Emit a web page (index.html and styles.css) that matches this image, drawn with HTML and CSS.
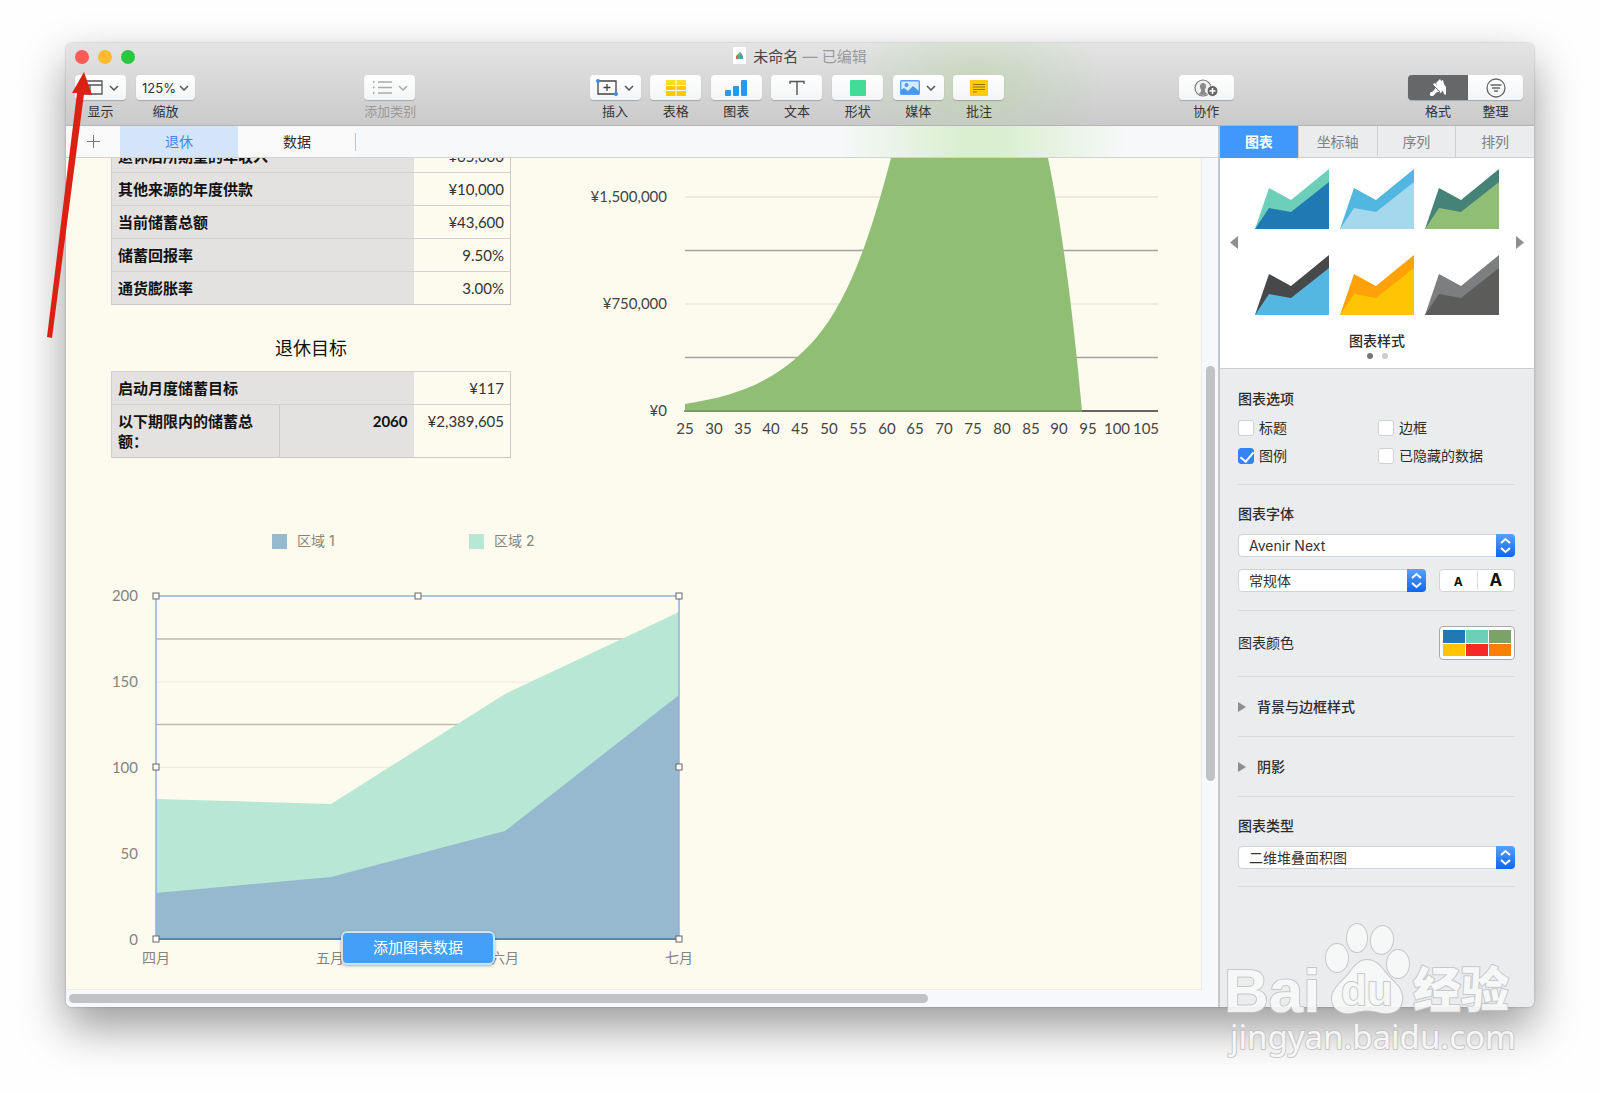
FILE: index.html
```html
<!DOCTYPE html>
<html lang="zh-CN">
<head>
    <meta charset="UTF-8">
    <meta name="viewport" content="width=device-width, initial-scale=1.0">
    <title>未命名</title>
    <link rel="stylesheet" href="styles.css">
</head>
<body>
    <div class="window">
        <header class="toolbar">
            <div class="titlebar">
                <div class="lights">
                    <button type="button" class="light red" aria-label="关闭"></button>
                    <button type="button" class="light yellow" aria-label="最小化"></button>
                    <button type="button" class="light green" aria-label="缩放窗口"></button>
                </div>
                <div class="title">
                    <svg width="13" height="17" viewBox="0 0 13 17">
                        <rect width="13" height="17" rx="1" fill="#fff"/>
                        <path d="M3 12V9l2-2v5z" fill="#e8604c"/>
                        <path d="M5 12V7l2-2v7z" fill="#62b37a"/>
                        <path d="M7 12V5l1 1 2 3v3z" fill="#4a9fb5"/>
                    </svg>
                    <span>未命名 <span class="edited">— 已编辑</span></span>
                </div>
            </div>
            <div class="tools">
                <div class="group">
                    <div class="tool">
                        <button type="button" id="view">
                            <svg width="20" height="15" viewBox="0 0 20 15" fill="none" stroke="#555" stroke-width="1.3"><path d="M1 1h18v13H1zM1 5h18M7 5v9"/></svg>
                            <svg class="chev" width="10" height="6" viewBox="0 0 10 6"><path d="M1 1l4 4 4-4"/></svg>
                        </button>
                        <label for="view">显示</label>
                    </div>
                    <div class="tool zoom">
                        <button type="button" id="zoom">125%
                            <svg class="chev" width="10" height="6" viewBox="0 0 10 6"><path d="M1 1l4 4 4-4"/></svg>
                        </button>
                        <label for="zoom">缩放</label>
                    </div>
                </div>
                <div class="space space-first"></div>
                <div class="tool off">
                    <button type="button" id="category" disabled>
                        <svg width="20" height="15" viewBox="0 0 20 15" stroke="#aaa" stroke-width="1.3"><path d="M6 2h14M6 7.500h14M6 13h14"/><path d="M1 .5l2 1.500L1 3.500zM1 6l2 1.500L1 9zM1 11.500l2 1.500-2 1.500z" fill="#aaa" stroke="none"/></svg>
                        <svg class="chev" width="10" height="6" viewBox="0 0 10 6"><path d="M1 1l4 4 4-4"/></svg>
                    </button>
                    <label for="category">添加类别</label>
                </div>
                <div class="space"></div>
                <div class="group insert">
                    <div class="tool">
                        <button type="button" id="insert">
                            <svg width="22" height="17" viewBox="0 0 22 17"><path d="M2 2h18v13H2zM11 5v7M7.500 8.500h7" fill="none" stroke="#444" stroke-width="1.300"/><circle cx="2" cy="2" r="2" fill="#3c8cf0"/><circle cx="20" cy="15" r="2" fill="#3c8cf0"/></svg>
                            <svg class="chev" width="10" height="6" viewBox="0 0 10 6"><path d="M1 1l4 4 4-4"/></svg>
                        </button>
                        <label for="insert">插入</label>
                    </div>
                    <div class="tool">
                        <button type="button" id="table">
                            <svg width="20" height="16" viewBox="0 0 20 16"><rect width="20" height="16" rx="1" fill="#ffc90a"/><rect width="20" height="5" rx="1" fill="#f8e01c"/><path d="M10 0v16M0 5.500h20M0 10.500h20" stroke="#fff" stroke-width="1"/></svg>
                        </button>
                        <label for="table">表格</label>
                    </div>
                    <div class="tool">
                        <button type="button" id="chart">
                            <svg width="22" height="16" viewBox="0 0 22 16" fill="#1f9cf0"><rect y="10" width="6" height="6" rx="1"/><rect x="8" y="6" width="6" height="10" rx="1"/><rect x="16" width="6" height="16" rx="1"/></svg>
                        </button>
                        <label for="chart">图表</label>
                    </div>
                    <div class="tool">
                        <button type="button" id="text">
                            <svg width="16" height="16" viewBox="0 0 16 16" fill="none" stroke="#555" stroke-width="1.400"><path d="M1 4V1.500h14V4M8 1.500V15"/></svg>
                        </button>
                        <label for="text">文本</label>
                    </div>
                    <div class="tool">
                        <button type="button" id="shape">
                            <svg width="16" height="16" viewBox="0 0 16 16"><rect width="16" height="16" rx="1" fill="#42dc98"/></svg>
                        </button>
                        <label for="shape">形状</label>
                    </div>
                    <div class="tool">
                        <button type="button" id="media">
                            <svg width="20" height="15" viewBox="0 0 20 15"><rect x=".7" y=".7" width="18.600" height="13.600" rx="1" fill="#d9eafd" stroke="#5b9ff5" stroke-width="1.400"/><circle cx="6.500" cy="5" r="2" fill="#4b95f3"/><path d="M1 14v-4l3-2 4 3 5-5 6 5v3z" fill="#4b95f3"/></svg>
                            <svg class="chev" width="10" height="6" viewBox="0 0 10 6"><path d="M1 1l4 4 4-4"/></svg>
                        </button>
                        <label for="media">媒体</label>
                    </div>
                    <div class="tool">
                        <button type="button" id="comment">
                            <svg width="18" height="16" viewBox="0 0 18 16"><rect width="18" height="16" rx="1" fill="#ffcc0d"/><path d="M3 4.500h12M3 7h12M3 9.500h12M3 12h4" stroke="#9a7410" stroke-width="1.200"/></svg>
                        </button>
                        <label for="comment">批注</label>
                    </div>
                </div>
                <div class="space"></div>
                <div class="tool wide">
                    <button type="button" id="collab">
                        <svg width="25" height="18" viewBox="0 0 25 18"><circle cx="9" cy="9" r="8" fill="#f2f2f2" stroke="#777" stroke-width="1.200"/><path d="M9 4c2 0 3 1.500 3 3.500 0 1.500-.5 2-1 3v2l2 2c-2 2-6 2-8 0l2-2v-2c-.500-1-1-1.500-1-3C6 5.500 7 4 9 4z" fill="#8a8a8a"/><circle cx="18.500" cy="12" r="5.500" fill="#666" stroke="#f8f8f8"/><path d="M18.500 9v6M15.500 12h6" stroke="#fff" stroke-width="1.500"/></svg>
                    </button>
                    <label for="collab">协作</label>
                </div>
                <div class="space"></div>
                <div class="segmented">
                    <div class="tool format">
                        <button type="button" id="format">
                            <svg width="18" height="18" viewBox="0 0 18 18" fill="#fff"><path d="M7 4l4-4 1 2 2-1 1 4 2 3v7l-1 1-1-1-1-3-3 1z"/><path d="M4 5l2-1 7 8-1 2-2-1-2 0-3 3c-1 2-5 1-4-1 0-2 1-2 2-2l3-3 0-2z"/><path d="M5 7l6 6" stroke="#666769"/></svg>
                        </button>
                        <label for="format">格式</label>
                    </div>
                    <div class="tool wide arrange">
                        <button type="button" id="arrange">
                            <svg width="20" height="20" viewBox="0 0 20 20" fill="none" stroke="#666" stroke-width="1.300"><circle cx="10" cy="10" r="9"/><path d="M4.500 7h11M6 10h8M8 13h4"/></svg>
                        </button>
                        <label for="arrange">整理</label>
                    </div>
                </div>
            </div>
        </header>

        <div class="content">
            <main class="document">
                <nav class="sheets">
                    <button type="button" class="add" aria-label="添加工作表"><svg width="13" height="13" viewBox="0 0 13 13" stroke="#777"><path d="M6.500 0v13M0 6.500h13"/></svg></button>
                    <button type="button" class="active">退休</button>
                    <button type="button">数据</button>
                </nav>
                <div class="canvas">
                    <div class="sheet">
                        <div class="top">
                            <div class="tables">
                                <table class="savings">
                                    <tr><th>退休后所期望的年收入</th><td>¥65,000</td></tr>
                                    <tr><th>其他来源的年度供款</th><td>¥10,000</td></tr>
                                    <tr><th>当前储蓄总额</th><td>¥43,600</td></tr>
                                    <tr><th>储蓄回报率</th><td>9.50%</td></tr>
                                    <tr><th>通货膨胀率</th><td>3.00%</td></tr>
                                </table>
                                <h2>退休目标</h2>
                                <table>
                                    <colgroup><col class="goal"><col class="year"><col></colgroup>
                                    <tr><th colspan="2">启动月度储蓄目标</th><td>¥117</td></tr>
                                    <tr><th>以下期限内的储蓄总额：</th><th class="num">2060</th><td>¥2,389,605</td></tr>
                                </table>
                            </div>
                            <svg class="growth" width="590" height="283" viewBox="-104 -253 590 283">
                                <path d="M0-214h473M0-107h473" stroke="#dddbd0"/>
                                <path d="M0-160.500h473M0-53.500h473" stroke="#a3a29c" stroke-width="1.500"/>
                                <path d="M-1 0h474" stroke="#666663" stroke-width="2"/>
                                <path d="M0 0V-7C60-16 97-34 131-73C164-112 185-173 206-253H363C376-190 388-100 397 0z" fill="#90be75"/>
                                <path d="M-1 0h398" stroke="#7b9b68" stroke-width="2"/>
                                <g text-anchor="end">
                                    <text x="-18" y="-209">¥1,500,000</text>
                                    <text x="-18" y="-102">¥750,000</text>
                                    <text x="-18" y="5">¥0</text>
                                </g>
                                <g text-anchor="middle">
                                    <text x="0" y="23">25</text><text x="29" y="23">30</text><text x="58" y="23">35</text>
                                    <text x="86" y="23">40</text><text x="115" y="23">45</text><text x="144" y="23">50</text>
                                    <text x="173" y="23">55</text><text x="202" y="23">60</text><text x="230" y="23">65</text>
                                    <text x="259" y="23">70</text><text x="288" y="23">75</text><text x="317" y="23">80</text>
                                    <text x="346" y="23">85</text><text x="374" y="23">90</text><text x="403" y="23">95</text>
                                    <text x="432" y="23">100</text><text x="461" y="23">105</text>
                                </g>
                            </svg>
                        </div>

                        <div class="legend">
                            <span class="blue">区域 1</span>
                            <span class="mint">区域 2</span>
                        </div>
                        <div class="plot">
                            <svg width="600" height="390" viewBox="-52 -358 600 390">
                                <path d="M0-257h523M0-171.500h523" stroke="#eceade"/>
                                <path d="M0-300h523M0-214.500h523" stroke="#bdbab0" stroke-width="1.500"/>
                                <path d="M0 0V-140L175-135L349-245L523-327V0z" fill="#b8e7d5"/>
                                <path d="M0 0V-46L175-62L349-108L523-244V0z" fill="#96b9cf"/>
                                <path d="M0 0V-343H523V0" fill="none" stroke="#92aede" stroke-width="1.500"/>
                                <path d="M0 0h523" stroke="#5f83b5" stroke-width="2"/>
                                <g fill="#fff" stroke="#666">
                                    <rect x="-3" y="-346" width="6" height="6"/><rect x="259" y="-346" width="6" height="6"/><rect x="520" y="-346" width="6" height="6"/>
                                    <rect x="-3" y="-175" width="6" height="6"/><rect x="520" y="-175" width="6" height="6"/>
                                    <rect x="-3" y="-3" width="6" height="6"/><rect x="520" y="-3" width="6" height="6"/>
                                </g>
                                <g text-anchor="end">
                                    <text x="-18" y="-338">200</text>
                                    <text x="-18" y="-252">150</text>
                                    <text x="-18" y="-166">100</text>
                                    <text x="-18" y="-80">50</text>
                                    <text x="-18" y="6">0</text>
                                </g>
                                <g class="months" text-anchor="middle">
                                    <text x="0" y="24">四月</text>
                                    <text x="174" y="24">五月</text>
                                    <text x="349" y="24">六月</text>
                                    <text x="523" y="24">七月</text>
                                </g>
                            </svg>
                            <button type="button" class="edit-data">添加图表数据</button>
                        </div>
                    </div>
                    <div class="scroll vertical"><div class="thumb"></div></div>
                    <div class="scroll horizontal"><div class="thumb"></div></div>
                </div>
            </main>

            <aside class="inspector">
                <nav class="tabs">
                    <button type="button" class="active">图表</button>
                    <button type="button">坐标轴</button>
                    <button type="button">序列</button>
                    <button type="button">排列</button>
                </nav>
                <div class="styles">
                    <div class="carousel">
                        <button type="button" class="arrow" aria-label="上一页"><svg width="8" height="13" viewBox="0 0 8 13"><path d="M8 0v13L0 6.500z"/></svg></button>
                        <div class="thumbs">
                            <svg viewBox="0 0 74 60"><path d="M0 60L14 19L36 31L74 0V60z" fill="#6dcfb9"/><path d="M0 60L14 39L36 43L74 13V60z" fill="#2079b2"/></svg>
                            <svg viewBox="0 0 74 60"><path d="M0 60L14 19L36 31L74 0V60z" fill="#51b7e0"/><path d="M0 60L14 39L36 43L74 13V60z" fill="#a5d8ed"/></svg>
                            <svg viewBox="0 0 74 60"><path d="M0 60L14 19L36 31L74 0V60z" fill="#458377"/><path d="M0 60L14 39L36 43L74 13V60z" fill="#90be75"/></svg>
                            <svg viewBox="0 0 74 60"><path d="M0 60L14 19L36 31L74 0V60z" fill="#47484a"/><path d="M0 60L14 39L36 43L74 13V60z" fill="#53b7e1"/></svg>
                            <svg viewBox="0 0 74 60"><path d="M0 60L14 19L36 31L74 0V60z" fill="#ffa20a"/><path d="M0 60L14 39L36 43L74 13V60z" fill="#ffc403"/></svg>
                            <svg viewBox="0 0 74 60"><path d="M0 60L14 19L36 31L74 0V60z" fill="#7c7e7f"/><path d="M0 60L14 39L36 43L74 13V60z" fill="#5c5c5a"/></svg>
                        </div>
                        <button type="button" class="arrow" aria-label="下一页"><svg width="8" height="13" viewBox="0 0 8 13"><path d="M0 0v13L8 6.500z"/></svg></button>
                    </div>
                    <h3>图表样式</h3>
                    <div class="dots"><i class="on"></i><i></i></div>
                </div>

                <section class="options">
                    <h3>图表选项</h3>
                    <div class="checks">
                        <label><input type="checkbox">标题</label>
                        <label><input type="checkbox">边框</label>
                        <label><input type="checkbox" checked>图例</label>
                        <label><input type="checkbox">已隐藏的数据</label>
                    </div>
                </section>
                <section class="fonts">
                    <h3><label for="family">图表字体</label></h3>
                    <div class="select">
                        <select id="family"><option>Avenir Next</option></select>
                        <svg width="19" height="23" viewBox="0 0 19 23"><path d="M5 9l4.500-4L14 9M5 14l4.500 4 4.500-4"/></svg>
                    </div>
                    <div class="row">
                        <div class="select">
                            <select aria-label="字样"><option>常规体</option></select>
                            <svg width="19" height="23" viewBox="0 0 19 23"><path d="M5 9l4.500-4L14 9M5 14l4.500 4 4.500-4"/></svg>
                        </div>
                        <div class="sizes">
                            <button type="button" class="smaller">A</button>
                            <button type="button" class="bigger">A</button>
                        </div>
                    </div>
                </section>
                <section class="colors">
                    <label for="palette">图表颜色</label>
                    <button type="button" id="palette"><i class="c1"></i><i class="c2"></i><i class="c3"></i><i class="c4"></i><i class="c5"></i><i class="c6"></i></button>
                </section>
                <section class="fold">
                    <button type="button"><svg width="8" height="10" viewBox="0 0 8 10"><path d="M0 0v10l8-5z"/></svg>背景与边框样式</button>
                </section>
                <section class="fold">
                    <button type="button"><svg width="8" height="10" viewBox="0 0 8 10"><path d="M0 0v10l8-5z"/></svg>阴影</button>
                </section>
                <section class="type">
                    <h3><label for="type">图表类型</label></h3>
                    <div class="select">
                        <select id="type"><option>二维堆叠面积图</option></select>
                        <svg width="19" height="23" viewBox="0 0 19 23"><path d="M5 9l4.500-4L14 9M5 14l4.500 4 4.500-4"/></svg>
                    </div>
                </section>
            </aside>
        </div>

        <svg class="pointer" width="46" height="268" viewBox="0 0 46 268" fill="#db2114"><path d="M0 265L30 21L25 21L37 0L45 23L37 22L5 266z"/></svg>

        <svg class="watermark" width="300" height="146" viewBox="0 0 300 146">
            <text class="brand" x="4" y="91">Bai</text>
            <g class="paw">
                <ellipse cx="117" cy="37" rx="11" ry="14"/>
                <ellipse cx="137" cy="17" rx="10" ry="14"/>
                <ellipse cx="162" cy="19" rx="11" ry="14" transform="rotate(8 162 19)"/>
                <ellipse cx="178" cy="43" rx="11" ry="14"/>
                <path d="M147 39C158 39 162 48 168 55C175 62 184 69 182 80C180 92 168 94 158 91C151 89 143 89 136 91C125 95 113 90 112 79C111 70 120 62 127 55C133 48 137 39 147 39z"/>
            </g>
            <text class="du" x="147" y="84" text-anchor="middle">du</text>
            <text class="cjk" x="193" y="86">经验</text>
            <text class="url" x="10" y="128">jingyan.baidu.com</text>
        </svg>
    </div>
</body>
</html>
```
FILE: styles.css
```css
* {
    box-sizing: border-box;
}
body {
    font-family: Inter, "Noto Sans CJK SC", sans-serif;
    font-size: 14px;
    line-height: 20px;
    margin: 0;
    padding: 43px 66px 86px;
    background-color: #fefefe;
    color: #2c2c2c;
}
button {
    font: inherit;
    color: inherit;
    border: none;
    padding: 0;
    background: none;
}
h2, h3 {
    margin: 0;
    font-size: 14px;
    font-weight: 500;
}
svg {
    display: block;
    flex: none;
}
.window {
    position: relative;
    display: flex;
    flex-direction: column;
    min-height: calc(100vh - 129px);
    border-radius: 6px;
    box-shadow: 0 0 2px rgba(0, 0, 0, 0.3), 0 20px 46px rgba(0, 0, 0, 0.4);
}

/* toolbar */
.toolbar {
    height: 83px;
    border-bottom: 1px solid #b4b4b4;
    border-radius: 6px 6px 0 0;
    background: radial-gradient(ellipse 130px 80px at 62% 50%, rgba(178, 212, 158, 0.5), rgba(178, 212, 158, 0)), linear-gradient(#e4e4e4, #cacacb);
}
.titlebar {
    position: relative;
    display: flex;
    justify-content: center;
    height: 28px;
    padding-top: 4px;
    font-size: 15px;
    color: #444;
}
.lights {
    position: absolute;
    left: 9px;
    top: 7px;
    display: flex;
    gap: 9px;
}
.light {
    width: 14px;
    height: 14px;
    border-radius: 50%;
}
.red {
    background-color: #fc5c56;
}
.yellow {
    background-color: #fdbc30;
}
.green {
    background-color: #29c840;
}
.title {
    display: flex;
    gap: 7px;
}
.edited {
    color: #999;
}
.tools {
    display: flex;
    padding: 4px 11px 0 9px;
}
.group {
    display: flex;
    gap: 10px;
}
.insert {
    width: 415px;
    gap: 0;
    justify-content: space-between;
}
.space {
    flex: 35;
}
.space-first {
    flex: 34;
}
.tool {
    width: 51px;
    font-size: 13px;
    text-align: center;
    color: #333;
}
.tool button {
    display: flex;
    align-items: center;
    justify-content: center;
    gap: 6px;
    width: 100%;
    height: 25px;
    border-radius: 4px;
    background: linear-gradient(#fff, #f3f4f5);
    box-shadow: 0 1px 1px rgba(0, 0, 0, 0.2);
}
.tool label {
    display: block;
    line-height: 22px;
    white-space: nowrap;
}
.chev {
    fill: none;
    stroke: #555;
    stroke-width: 1.5;
}
.zoom {
    width: 59px;
}
.zoom button {
    gap: 3px;
}
.off {
    color: #999;
}
.off button {
    color: #aaa;
}
.off .chev {
    stroke: #aaa;
}
.wide {
    width: 55px;
}
.segmented {
    display: flex;
}
.format {
    width: 60px;
}
.format button {
    border-radius: 4px 0 0 4px;
    background: #666769;
}
.arrange button {
    border-radius: 0 4px 4px 0;
}

.content {
    flex: 1;
    display: flex;
}
.document {
    flex: 1;
    min-width: 0;
    display: flex;
    flex-direction: column;
}

/* sheet tabs */
.sheets {
    display: flex;
    height: 32px;
    border-bottom: 1px solid #d2d2d0;
    background: linear-gradient(90deg, rgba(215, 238, 205, 0) 67%, #d9efcf 78%, #d9efcf 81%, rgba(215, 238, 205, 0) 92%), #f7f8fa;
}
.sheets button {
    width: 118px;
    font-size: 14px;
    background-color: #faf9f9;
    position: relative;
}
.sheets .add {
    display: flex;
    align-items: center;
    justify-content: center;
    width: 54px;
}
.sheets .active {
    background-color: #d4e5fa;
    color: #3d8ae6;
}
.sheets button:last-child::after {
    content: "";
    position: absolute;
    right: 0;
    top: 7px;
    height: 18px;
    border-right: 1px solid #c4c4c4;
}

/* canvas */
.canvas {
    flex: 1;
    display: grid;
    grid-template-columns: 1fr 16px;
    grid-template-rows: 1fr 17px;
    background-color: #f7f8fb;
    border-radius: 0 0 0 6px;
}
.sheet {
    overflow: hidden;
    background-color: #fdfbee;
    border: 1px solid #ececea;
    border-width: 0 1px 1px 0;
    color: #333;
}
.scroll {
    padding: 4px;
}
.vertical {
    padding-top: 208px;
}
.horizontal {
    grid-column: 1 / 3;
    padding-left: 3px;
}
.thumb {
    border-radius: 5px;
    background-color: #c1c2c4;
}
.vertical .thumb {
    width: 9px;
    height: 67%;
}
.horizontal .thumb {
    width: 75%;
    height: 9px;
}
.top {
    display: flex;
    gap: 70px;
    padding-left: 45px;
}
.tables {
    width: 400px;
    flex: none;
}
table {
    width: 100%;
    table-layout: fixed;
    border-collapse: collapse;
    border: 1px solid #c9c8c2;
    font-family: Lato, "Noto Sans CJK SC", sans-serif;
    font-size: 15px;
}
.savings {
    margin-top: -19px;
}
.savings th {
    width: 302px;
}
.goal {
    width: 168px;
}
.year {
    width: 134px;
}
th, td {
    height: 33px;
    padding: 6px;
    border-top: 1px solid #d3d2cc;
    vertical-align: top;
    line-height: 20px;
}
th {
    background-color: #e3e2e0;
    border-left: 1px solid #cfcecb;
    text-align: left;
    font-weight: bold;
    color: #111;
}
td, .num {
    text-align: right;
}
h2 {
    padding: 32px 0 10px;
    line-height: 24px;
    font-size: 18px;
    font-weight: normal;
    text-align: center;
    color: #111;
}
.sheet text {
    font-family: Lato, "Noto Sans CJK SC", sans-serif;
    font-size: 15px;
    fill: #444;
}
.legend {
    display: grid;
    grid-template-columns: 197px 197px;
    padding: 73px 0 30px 206px;
    color: #85847e;
}
.legend span {
    display: flex;
    align-items: center;
    gap: 10px;
}
.legend span::before {
    content: "";
    width: 15px;
    height: 15px;
    background-color: #96b9cf;
}
.legend .mint::before {
    background-color: #b8e7d5;
}
.plot {
    position: relative;
    width: 600px;
    margin-left: 38px;
}
.plot text {
    fill: #85847e;
}
.plot .months text {
    font-size: 14px;
}
.edit-data {
    position: absolute;
    left: 237px;
    top: 350px;
    width: 154px;
    height: 34px;
    border: 2px solid #c9e3f7;
    border-radius: 6px;
    background-color: #439ff8;
    box-shadow: 0 1px 3px rgba(0, 0, 0, 0.3);
    color: #fff;
    font-size: 15px;
}

/* inspector */
.inspector {
    width: 316px;
    border-left: 2px solid #c6c7c9;
    border-radius: 0 0 6px 0;
    background-color: #ebecee;
}
.tabs {
    display: flex;
    height: 32px;
    border-bottom: 1px solid #cfcfcf;
}
.tabs button {
    flex: 1;
    border-left: 1px solid #cfcfcf;
    color: #7f8082;
}
.tabs .active {
    border-left: none;
    margin-bottom: -1px;
    background-color: #4097fc;
    color: #fff;
    font-weight: bold;
}
.styles {
    height: 211px;
    padding-top: 11px;
    border-bottom: 1px solid #cfcfd1;
    background-color: #fff;
    text-align: center;
}
.carousel {
    display: flex;
    align-items: center;
    justify-content: space-between;
    padding: 0 10px;
}
.arrow {
    fill: #8e8e8e;
}
.thumbs {
    display: grid;
    grid-template-columns: repeat(3, 74px);
    gap: 26px 11px;
}
.styles h3 {
    margin-top: 16px;
}
.dots {
    display: flex;
    justify-content: center;
    gap: 9px;
    margin-top: 2px;
}
.dots i {
    width: 6px;
    height: 6px;
    border-radius: 50%;
    background-color: #ccc;
}
.dots .on {
    background-color: #777;
}
section {
    margin: 0 19px 0 18px;
    border-bottom: 1px solid #d9dadc;
}
.options {
    padding: 20px 0 14px;
}
.checks {
    display: grid;
    grid-template-columns: 140px 1fr;
    padding-top: 5px;
}
.checks label {
    display: flex;
    align-items: center;
    gap: 5px;
    height: 28px;
}
.checks input {
    appearance: none;
    position: relative;
    width: 16px;
    height: 16px;
    margin: 0;
    border: 1px solid #cfcfd1;
    border-radius: 3px;
    background-color: #fff;
}
.checks input:checked {
    border-color: #3583f6;
    background-color: #3583f6;
}
.checks input:checked::after {
    content: "";
    position: absolute;
    left: 4px;
    top: 0;
    width: 6px;
    height: 11px;
    border: solid #fff;
    border-width: 0 2px 2px 0;
    transform: rotate(40deg);
}
.fonts {
    padding: 19px 0 18px;
}
.fonts h3, .type h3 {
    margin-bottom: 10px;
}
.select {
    position: relative;
    flex: 1;
}
select {
    display: block;
    appearance: none;
    width: 100%;
    height: 23px;
    padding: 0 24px 0 10px;
    border: 1px solid #d2d3d5;
    border-radius: 4px;
    background-color: #fff;
    font: inherit;
    line-height: 20px;
    color: #333;
}
.select svg {
    position: absolute;
    right: 0;
    top: 0;
    border-radius: 0 4px 4px 0;
    background: linear-gradient(#5b9ff8, #0f66f6);
    fill: none;
    stroke: #fff;
    stroke-width: 2;
    pointer-events: none;
}
.row {
    display: flex;
    gap: 13px;
    margin-top: 12px;
}
.sizes {
    display: flex;
    align-items: baseline;
    width: 76px;
    height: 23px;
    border: 1px solid #d2d3d5;
    border-radius: 4px;
    background-color: #fff;
    font-weight: bold;
    color: #111;
}
.sizes button {
    flex: 1;
}
.smaller {
    font-size: 12px;
}
.bigger {
    border-left: 1px solid #ddd;
    font-size: 17px;
}
.colors {
    display: flex;
    align-items: center;
    justify-content: space-between;
    padding: 15px 0 16px;
}
#palette {
    display: grid;
    grid-template-columns: repeat(3, 1fr);
    gap: 1px;
    width: 76px;
    height: 34px;
    padding: 3px;
    border: 1px solid #a9a9a9;
    border-radius: 4px;
    background-color: #fff;
}
.c1 {
    background-color: #2079b2;
}
.c2 {
    background-color: #6dcfb9;
}
.c3 {
    background-color: #7aa466;
}
.c4 {
    background-color: #ffc403;
}
.c5 {
    background-color: #f52a27;
}
.c6 {
    background-color: #fa8005;
}
.fold button {
    display: flex;
    align-items: center;
    gap: 11px;
    height: 59px;
    font-weight: 500;
    fill: #8e8e8e;
}
.type {
    padding: 19px 0 17px;
}

/* overlays */
.pointer {
    position: absolute;
    left: -19px;
    top: 29px;
}
.watermark {
    position: absolute;
    right: 14px;
    bottom: -60px;
    fill: #f8f8f8;
    stroke: #c4c5c6;
    stroke-width: 2;
    stroke-linejoin: round;
    paint-order: stroke;
    opacity: 0.92;
}
.brand {
    font: bold 62px "Liberation Sans", sans-serif;
}
.du {
    font: bold 42px "Liberation Sans", sans-serif;
}
.cjk {
    font: 900 48px "Noto Sans CJK SC", sans-serif;
}
.url {
    font: 33px "Noto Sans", sans-serif;
}
```
